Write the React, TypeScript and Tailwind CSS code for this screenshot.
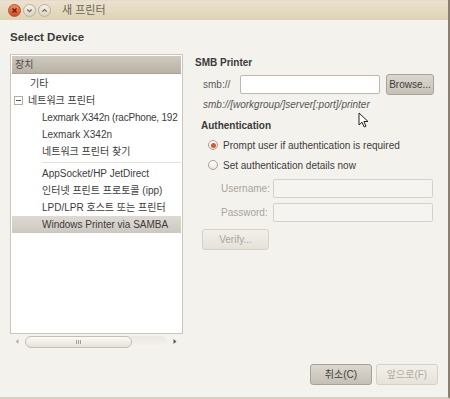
import React from "react";

const font = "font-['Liberation_Sans','Noto_Sans_CJK_KR',sans-serif]";

function TitleButton({ kind }: { kind: "close" | "min" | "max" }) {
  if (kind === "close") {
    return (
      <div className="w-[13px] h-[13px] rounded-full bg-gradient-to-b from-[#f28a5e] to-[#d9471f] border border-[#b8502e] flex items-center justify-center">
        <svg width="7" height="7" viewBox="0 0 7 7">
          <path d="M1.5 1.5 L5.5 5.5 M5.5 1.5 L1.5 5.5" stroke="#5a2212" strokeWidth="1.3" />
        </svg>
      </div>
    );
  }
  return (
    <div className="w-[13px] h-[13px] rounded-full bg-gradient-to-b from-[#f4f1ea] to-[#d9d3c2] border border-[#b9b19c] flex items-center justify-center">
      <svg width="7" height="7" viewBox="0 0 7 7">
        <path
          d={kind === "min" ? "M1.3 2.5 L3.5 4.7 L5.7 2.5" : "M1.3 4.7 L3.5 2.5 L5.7 4.7"}
          stroke="#6f6757"
          strokeWidth="1.2"
          fill="none"
        />
      </svg>
    </div>
  );
}

function Row({ text, indent, selected, expander, tight }: { text: string; indent: number; selected?: boolean; expander?: boolean; tight?: boolean }) {
  return (
    <div
      className={
        "h-[17px] flex items-center whitespace-nowrap overflow-hidden text-[10px] text-[#3c3c3c] " +
        (selected ? "bg-gradient-to-b from-[#dedad3] to-[#cdc8bf] " : "") +
        (tight ? "tracking-[-0.2px]" : "")
      }
      style={{ paddingLeft: indent }}
    >
      {expander && (
        <div className="w-[9px] h-[9px] border border-[#b4ada0] bg-white flex items-center justify-center mr-[5px] -ml-[15px]">
          <div className="w-[5px] h-px bg-[#555]" />
        </div>
      )}
      {text}
    </div>
  );
}

function Radio({ checked }: { checked?: boolean }) {
  return (
    <div className="w-[10px] h-[10px] rounded-full border border-[#a8a196] bg-gradient-to-b from-white to-[#e8e5df] flex items-center justify-center">
      {checked && <div className="w-[5px] h-[5px] rounded-full bg-[#e0552f]" />}
    </div>
  );
}

export default function App() {
  return (
    <div className={`w-[450px] h-[399px] bg-[#f4f2ed] flex flex-col border-r-2 border-r-[#8a7f70] border-b-2 border-b-[#d6cfc2] ${font}`}>
      {/* title bar */}
      <div className="h-[20px] shrink-0 bg-gradient-to-b from-[#ebe2cf] to-[#ddd4b4] border-t border-t-[#e9d8cf] flex items-center pl-[8px]">
        <div className="flex gap-[2px]">
          <TitleButton kind="close" />
          <TitleButton kind="min" />
          <TitleButton kind="max" />
        </div>
        <span className="ml-[11px] text-[11px] text-[#6b6455]">새 프린터</span>
      </div>

      <div className="flex-1 flex flex-col px-[10px]">
        <div className="mt-[11px] h-[14px] flex items-center text-[11.5px] font-bold text-[#3a3a3a]">Select Device</div>

        <div className="flex mt-[9px]">
          {/* left: device tree */}
          <div className="w-[173px] flex flex-col">
            <div className="h-[280px] bg-white border border-[#cbc6bc] p-[1px] flex flex-col">
              <div className="h-[18px] flex items-center pl-[3px] text-[10px] text-[#4a4a4a] bg-gradient-to-b from-[#cfc9bf] to-[#b9b2a5] border-b border-[#a9a194]">
                장치
              </div>
              <div className="h-[1px]" />
              <Row text="기타" indent={18} />
              <Row text="네트워크 프린터" indent={17} expander />
              <Row text="Lexmark X342n (racPhone, 192" indent={30} tight />
              <Row text="Lexmark X342n" indent={30} />
              <Row text="네트워크 프린터 찾기" indent={30} />
              <div className="h-[5px] flex items-center pl-[30px]">
                <div className="h-px w-full bg-[#e4e1db]" />
              </div>
              <Row text="AppSocket/HP JetDirect" indent={30} />
              <Row text="인터넷 프린트 프로토콜 (ipp)" indent={30} />
              <Row text="LPD/LPR 호스트 또는 프린터" indent={30} />
              <Row text="Windows Printer via SAMBA" indent={30} selected />
            </div>
            {/* horizontal scrollbar */}
            <div className="h-[13px] mt-px flex items-center">
              <svg width="15" height="13" viewBox="0 0 15 13">
                <path d="M8.5 4 L5.5 6.5 L8.5 9 Z" fill="#b5afa4" />
              </svg>
              <div className="w-[142px] h-[12px] rounded-full bg-gradient-to-b from-[#ebe8e2] to-[#f6f4f0] flex">
                <div className="w-[107px] h-[12px] rounded-full border border-[#c5beb1] bg-gradient-to-b from-[#fbfaf8] to-[#e6e2da] flex items-center justify-center gap-px">
                  <div className="w-px h-[4px] bg-[#a59e91]" />
                  <div className="w-px h-[4px] bg-[#a59e91]" />
                  <div className="w-px h-[4px] bg-[#a59e91]" />
                </div>
              </div>
              <svg width="15" height="13" viewBox="0 0 15 13">
                <path d="M6.5 4 L9.5 6.5 L6.5 9 Z" fill="#5e584e" />
              </svg>
            </div>
          </div>

          {/* right: SMB settings */}
          <div className="relative ml-[12px] w-[239px] flex flex-col text-[10px] text-[#3c3c3c]">
            <div className="h-[12px] flex items-center font-bold text-[10px] text-[#3a3a3a] mt-[2px]">SMB Printer</div>
            <div className="flex items-center mt-[6px] pl-[8px]">
              <span className="text-[#5a5a5a] w-[37px]">smb://</span>
              <div className="w-[140px] h-[19px] bg-white border border-[#bdb7ac] rounded-[2px]" />
              <button className="ml-[6px] w-[48px] h-[21px] rounded-[3px] border border-[#aaa395] bg-gradient-to-b from-[#dcd8cf] to-[#c6c1b6] text-[10px] text-[#3c3c3c]">
                Browse...
              </button>
            </div>
            <div className="mt-[2px] pl-[8px] italic text-[#555]">smb://[workgroup/]server[:port]/printer</div>
            <div className="mt-[7px] pl-[6px] h-[12px] flex items-center font-bold text-[#3a3a3a]">Authentication</div>
            <svg className="absolute left-[163px] top-[58px]" width="12" height="16" viewBox="0 0 12 16">
              <path d="M1 1 L1 13 L4 10.2 L6.2 15 L8 14.2 L5.9 9.5 L10 9.5 Z" fill="#fff" stroke="#222" strokeWidth="1" strokeLinejoin="round" />
            </svg>
            <div className="mt-[7px] pl-[13px] h-[14px] flex items-center gap-[5px]">
              <Radio checked />
              <span>Prompt user if authentication is required</span>
            </div>
            <div className="mt-[6px] pl-[13px] h-[14px] flex items-center gap-[5px]">
              <Radio />
              <span>Set authentication details now</span>
            </div>
            <div className="mt-[7px] flex items-center pl-[26px] text-[#aaa59c]">
              <span className="w-[52px]">Username:</span>
              <div className="w-[160px] h-[19px] border border-[#d6d1c8] rounded-[2px] bg-[#f6f4f0]" />
            </div>
            <div className="mt-[5px] flex items-center pl-[26px] text-[#aaa59c]">
              <span className="w-[52px]">Password:</span>
              <div className="w-[160px] h-[19px] border border-[#d6d1c8] rounded-[2px] bg-[#f6f4f0]" />
            </div>
            <button className="mt-[7px] ml-[7px] w-[67px] h-[21px] rounded-[3px] border border-[#d6d1c6] bg-gradient-to-b from-[#f2f0ea] to-[#e6e2d9] text-[10px] text-[#aaa59c]">
              Verify...
            </button>
          </div>
        </div>

        <div className="flex-1" />
        <div className="flex justify-end gap-[4px] mb-[12px]">
          <button className="w-[62px] h-[21px] rounded-[3px] border border-[#a9a294] bg-gradient-to-b from-[#dcd8cf] to-[#c5c0b5] text-[10px] text-[#3c3c3c]">
            취소(C)
          </button>
          <button className="w-[62px] h-[21px] rounded-[3px] border border-[#d6d1c6] bg-gradient-to-b from-[#f2f0ea] to-[#e7e3da] text-[10px] text-[#b0aba2]">
            앞으로(F)
          </button>
        </div>
      </div>
    </div>
  );
}
